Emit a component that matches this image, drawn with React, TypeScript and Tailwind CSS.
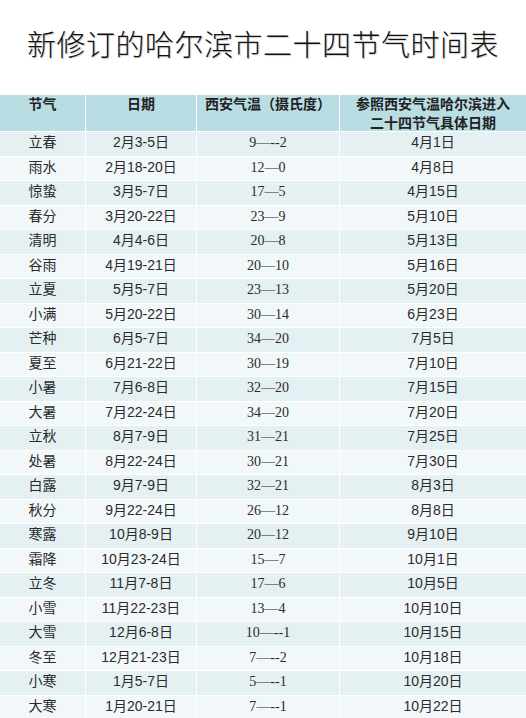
const rows: [string, string, string, string][] = [
  ['立春', '2月3-5日', '9—--2', '4月1日'],
  ['雨水', '2月18-20日', '12—0', '4月8日'],
  ['惊蛰', '3月5-7日', '17—5', '4月15日'],
  ['春分', '3月20-22日', '23—9', '5月10日'],
  ['清明', '4月4-6日', '20—8', '5月13日'],
  ['谷雨', '4月19-21日', '20—10', '5月16日'],
  ['立夏', '5月5-7日', '23—13', '5月20日'],
  ['小满', '5月20-22日', '30—14', '6月23日'],
  ['芒种', '6月5-7日', '34—20', '7月5日'],
  ['夏至', '6月21-22日', '30—19', '7月10日'],
  ['小暑', '7月6-8日', '32—20', '7月15日'],
  ['大暑', '7月22-24日', '34—20', '7月20日'],
  ['立秋', '8月7-9日', '31—21', '7月25日'],
  ['处暑', '8月22-24日', '30—21', '7月30日'],
  ['白露', '9月7-9日', '32—21', '8月3日'],
  ['秋分', '9月22-24日', '26—12', '8月8日'],
  ['寒露', '10月8-9日', '20—12', '9月10日'],
  ['霜降', '10月23-24日', '15—7', '10月1日'],
  ['立冬', '11月7-8日', '17—6', '10月5日'],
  ['小雪', '11月22-23日', '13—4', '10月10日'],
  ['大雪', '12月6-8日', '10—--1', '10月15日'],
  ['冬至', '12月21-23日', '7—--2', '10月18日'],
  ['小寒', '1月5-7日', '5—--1', '10月20日'],
  ['大寒', '1月20-21日', '7—--1', '10月22日'],
];

const cols = 'grid grid-cols-[86px_111px_143px_1fr]';

export default function App() {
  return (
    <div className="w-[526px] h-[718px] overflow-hidden bg-white font-['Liberation_Sans','Noto_Sans_CJK_SC',sans-serif] text-[#2b2b2b]">
      <div className="h-[95px] flex items-center justify-center pb-[2px]">
        <h1 className="text-[29px] leading-none tracking-[0.5px] font-light text-[#111] [text-shadow:1px_1px_1px_#ccc] font-['Liberation_Serif','Noto_Sans_CJK_SC',serif]">
          新修订的哈尔滨市二十四节气时间表
        </h1>
      </div>

      <div className={`${cols} h-[36px] bg-[#b9dde2] text-[14px] leading-[19px] font-bold text-[#222] text-center`}>
        <div className="border-r border-white">节气</div>
        <div className="border-r border-white">日期</div>
        <div className="border-r border-white">西安气温（摄氏度）</div>
        <div>
          参照西安气温哈尔滨进入
          <br />
          二十四节气具体日期
        </div>
      </div>

      {rows.map((r, i) => (
        <div
          key={r[0]}
          className={`${cols} h-[24.5px] border-t border-white text-[14px] leading-[21px] text-center ${
            i % 2 === 0 ? 'bg-[#e5f0f2]' : 'bg-[#f2f7f9]'
          }`}
        >
          <div className="border-r border-white">{r[0]}</div>
          <div className="border-r border-white">{r[1]}</div>
          <div className="border-r border-white font-['Liberation_Serif','Noto_Sans_CJK_SC',serif]">{r[2]}</div>
          <div>{r[3]}</div>
        </div>
      ))}
    </div>
  );
}
